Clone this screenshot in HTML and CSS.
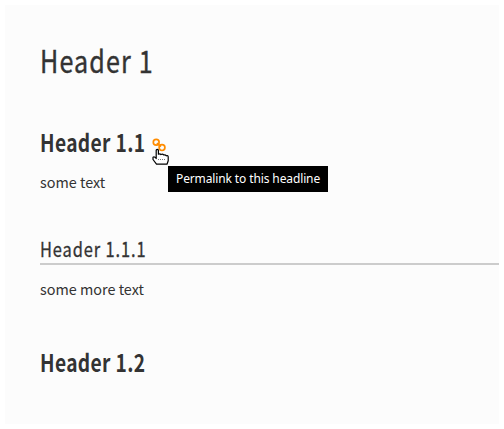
FILE: index.html
```html
<!DOCTYPE html>
<html lang="en">
<head>
<meta charset="utf-8">
<title>Header 1</title>
<link rel="stylesheet" href="styles.css">
</head>
<body>
<main class="page">
  <h1><span>Header 1</span></h1>
  <h2><span>Header 1.1</span>
    <a class="permalink" href="#header-1-1" aria-label="Permalink">
      <svg class="link-icon" width="14" height="14" viewBox="0 0 14 14"><circle cx="4.2" cy="4.2" r="2.9"/><circle cx="10" cy="9.6" r="2.9"/><path d="M4.9 5.2 8.9 8.6"/></svg>
      <svg class="pointer" width="18" height="18" viewBox="0 0 18 18"><path d="M4.2 10.5V2.2Q5.3.5 6.4 2.2V6.2Q8 5.2 9 6.6 10.5 5.7 11.8 7 13.2 6.3 14.4 7.8Q16.2 7.2 16.2 9V12.8L15 16.2H4.5L1 11.5V9.2Q2.5 8.3 4.2 10.5Z"/><path class="dots" d="M6 11.5H14"/></svg>
      <span class="tooltip">Permalink to this headline</span>
    </a>
  </h2>
  <p>some text</p>
  <h3><span>Header 1.1.1</span></h3>
  <p class="after-rule">some more text</p>
  <h2 class="last"><span>Header 1.2</span></h2>
</main>
</body>
</html>
```
FILE: styles.css
```css
body {
  margin: 5px;
  background: #fff;
  color: #333;
  font-family: "Noto Sans CJK SC", "Noto Sans", sans-serif;
}
.page {
  box-sizing: border-box;
  height: 419px;
  padding: 35px 0 0 35px;
  background: #fcfcfc;
}
h1, h2, h3, p { margin: 0; }
h1 > span, h2 > span, h3 > span {
  display: inline-block;
  transform-origin: left center;
  white-space: nowrap;
}
h1 {
  height: 40px;
  font-size: 31px;
  font-weight: 400;
  line-height: 40px;
}
h1 > span { transform: scaleX(.81); letter-spacing: 1.4px; -webkit-text-stroke: .4px #333; }
h2 {
  position: relative;
  height: 30px;
  margin-top: 47px;
  font-size: 24px;
  font-weight: 700;
  line-height: 30px;
}
h2 > span { transform: scaleX(.8); letter-spacing: .45px; }
h3 {
  height: 27px;
  margin-top: 44px;
  border-bottom: 2px solid #ccc;
  font-size: 20px;
  font-weight: 400;
  line-height: 26px;
}
h3 > span { transform: scaleX(.82); letter-spacing: 1.1px; -webkit-text-stroke: .3px #333; }
p {
  height: 20px;
  margin-top: 15px;
  font-size: 14.4px;
  line-height: 19px;
}
.after-rule { margin-top: 14px; }
.last { margin-top: 48px; }
.permalink {
  position: absolute;
  top: 11px;
  left: 112px;
  line-height: 0;
}
.link-icon {
  fill: none;
  stroke: #ff8c00;
  stroke-width: 1.7;
}
.pointer {
  position: absolute;
  top: 10px;
  left: 0;
  fill: #fff;
  stroke: #000;
  stroke-width: 1.2;
  stroke-linejoin: round;
}
.dots { stroke: #777; stroke-dasharray: 1 1; }
.tooltip {
  position: absolute;
  top: 28px;
  left: 16px;
  box-sizing: border-box;
  width: 160px;
  height: 26px;
  padding-left: 8px;
  background: #000;
  color: #fff;
  font: 400 12px/26px "Noto Sans", sans-serif;
  letter-spacing: -.12px;
  white-space: nowrap;
}
```
